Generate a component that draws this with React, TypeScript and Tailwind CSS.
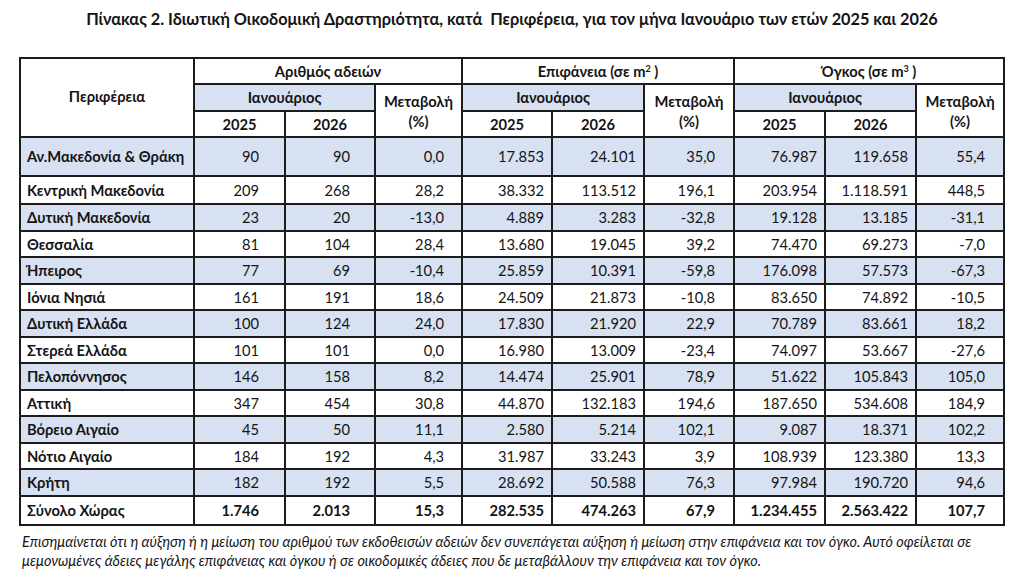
import React from 'react';

const rows: string[][] = [
  ['Αν.Μακεδονία & Θράκη', '90', '90', '0,0', '17.853', '24.101', '35,0', '76.987', '119.658', '55,4'],
  ['Κεντρική Μακεδονία', '209', '268', '28,2', '38.332', '113.512', '196,1', '203.954', '1.118.591', '448,5'],
  ['Δυτική Μακεδονία', '23', '20', '-13,0', '4.889', '3.283', '-32,8', '19.128', '13.185', '-31,1'],
  ['Θεσσαλία', '81', '104', '28,4', '13.680', '19.045', '39,2', '74.470', '69.273', '-7,0'],
  ['Ήπειρος', '77', '69', '-10,4', '25.859', '10.391', '-59,8', '176.098', '57.573', '-67,3'],
  ['Ιόνια Νησιά', '161', '191', '18,6', '24.509', '21.873', '-10,8', '83.650', '74.892', '-10,5'],
  ['Δυτική Ελλάδα', '100', '124', '24,0', '17.830', '21.920', '22,9', '70.789', '83.661', '18,2'],
  ['Στερεά Ελλάδα', '101', '101', '0,0', '16.980', '13.009', '-23,4', '74.097', '53.667', '-27,6'],
  ['Πελοπόννησος', '146', '158', '8,2', '14.474', '25.901', '78,9', '51.622', '105.843', '105,0'],
  ['Αττική', '347', '454', '30,8', '44.870', '132.183', '194,6', '187.650', '534.608', '184,9'],
  ['Βόρειο Αιγαίο', '45', '50', '11,1', '2.580', '5.214', '102,1', '9.087', '18.371', '102,2'],
  ['Νότιο Αιγαίο', '184', '192', '4,3', '31.987', '33.243', '3,9', '108.939', '123.380', '13,3'],
  ['Κρήτη', '182', '192', '5,5', '28.692', '50.588', '76,3', '97.984', '190.720', '94,6'],
];

const total = ['Σύνολο Χώρας', '1.746', '2.013', '15,3', '282.535', '474.263', '67,9', '1.234.455', '2.563.422', '107,7'];

// right padding per numeric column, as in the source document
const pad = ['pr-[25px]', 'pr-[24px]', 'pr-[17px]', 'pr-[7px]', 'pr-[7px]', 'pr-[18px]', 'pr-[7px]', 'pr-[7px]', 'pr-[18px]'];

const cell = 'border-2 border-[#1c1c1c]';
const blue = 'bg-[#d7e1f1]';

export default function App() {
  return (
    <div className="w-[1024px] h-[587px] bg-white text-[#141414] font-['Lato','Open_Sans',sans-serif] overflow-hidden">
      <h1 className="pt-[9px] text-center text-[16.3px] leading-[20px] font-bold">
        Πίνακας 2. Ιδιωτική Οικοδομική Δραστηριότητα, κατά&nbsp; Περιφέρεια, για τον μήνα Ιανουάριο των ετών 2025 και 2026
      </h1>

      <table className="ml-[19px] mt-[28px] w-[984px] table-fixed border-collapse text-[14.7px]">
        <colgroup>
          <col className="w-[174px]" />
          <col className="w-[91px]" />
          <col className="w-[90px]" />
          <col className="w-[87px]" />
          <col className="w-[90px]" />
          <col className="w-[92px]" />
          <col className="w-[90px]" />
          <col className="w-[91px]" />
          <col className="w-[91px]" />
          <col className="w-[88px]" />
        </colgroup>
        <thead className="font-bold text-center">
          <tr className="h-[26px]">
            <th rowSpan={3} className={`${cell} pb-[2px]`}>Περιφέρεια</th>
            <th colSpan={3} className={cell}>Αριθμός αδειών</th>
            <th colSpan={3} className={cell}>
              Επιφάνεια (σε m<sup className="text-[9px]">2</sup> )
            </th>
            <th colSpan={3} className={cell}>
              Όγκος (σε m<sup className="text-[9px]">3</sup> )
            </th>
          </tr>
          <tr className="h-[27px]">
            <th colSpan={2} className={`${cell} ${blue}`}>Ιανουάριος</th>
            <th rowSpan={2} className={`${cell} leading-[20px]`}>Μεταβολή<br />(%)</th>
            <th colSpan={2} className={`${cell} ${blue}`}>Ιανουάριος</th>
            <th rowSpan={2} className={`${cell} leading-[20px]`}>Μεταβολή<br />(%)</th>
            <th colSpan={2} className={`${cell} ${blue}`}>Ιανουάριος</th>
            <th rowSpan={2} className={`${cell} leading-[20px]`}>Μεταβολή<br />(%)</th>
          </tr>
          <tr className="h-[26px]">
            <th className={cell}>2025</th>
            <th className={cell}>2026</th>
            <th className={cell}>2025</th>
            <th className={cell}>2026</th>
            <th className={cell}>2025</th>
            <th className={cell}>2026</th>
          </tr>
        </thead>
        <tbody>
          {rows.map((r, i) => (
            <tr key={r[0]} className={`${i === 0 ? 'h-[39px]' : i === 1 ? 'h-[28px]' : 'h-[26.5px]'} ${i % 2 === 0 ? blue : 'bg-white'}`}>
              <td className={`${cell} pl-[6px] font-bold whitespace-nowrap`}>{r[0]}</td>
              {r.slice(1).map((v, j) => (
                <td key={j} className={`${cell} text-right ${pad[j]}`}>{v}</td>
              ))}
            </tr>
          ))}
          <tr className="h-[29px] bg-white font-bold">
            <td className={`${cell} pl-[6px]`}>{total[0]}</td>
            {total.slice(1).map((v, j) => (
              <td key={j} className={`${cell} text-right ${pad[j]}`}>{v}</td>
            ))}
          </tr>
        </tbody>
      </table>

      <p className="ml-[22px] mt-[6px] w-[980px] text-[14.4px] leading-[19px] italic">
        Επισημαίνεται ότι η αύξηση ή η μείωση του αριθμού των εκδοθεισών αδειών δεν συνεπάγεται αύξηση ή μείωση στην επιφάνεια και τον όγκο. Αυτό οφείλεται σε μεμονωμένες άδειες μεγάλης επιφάνειας και όγκου ή σε οικοδομικές άδειες που δε μεταβάλλουν την επιφάνεια και τον όγκο.
      </p>
    </div>
  );
}
